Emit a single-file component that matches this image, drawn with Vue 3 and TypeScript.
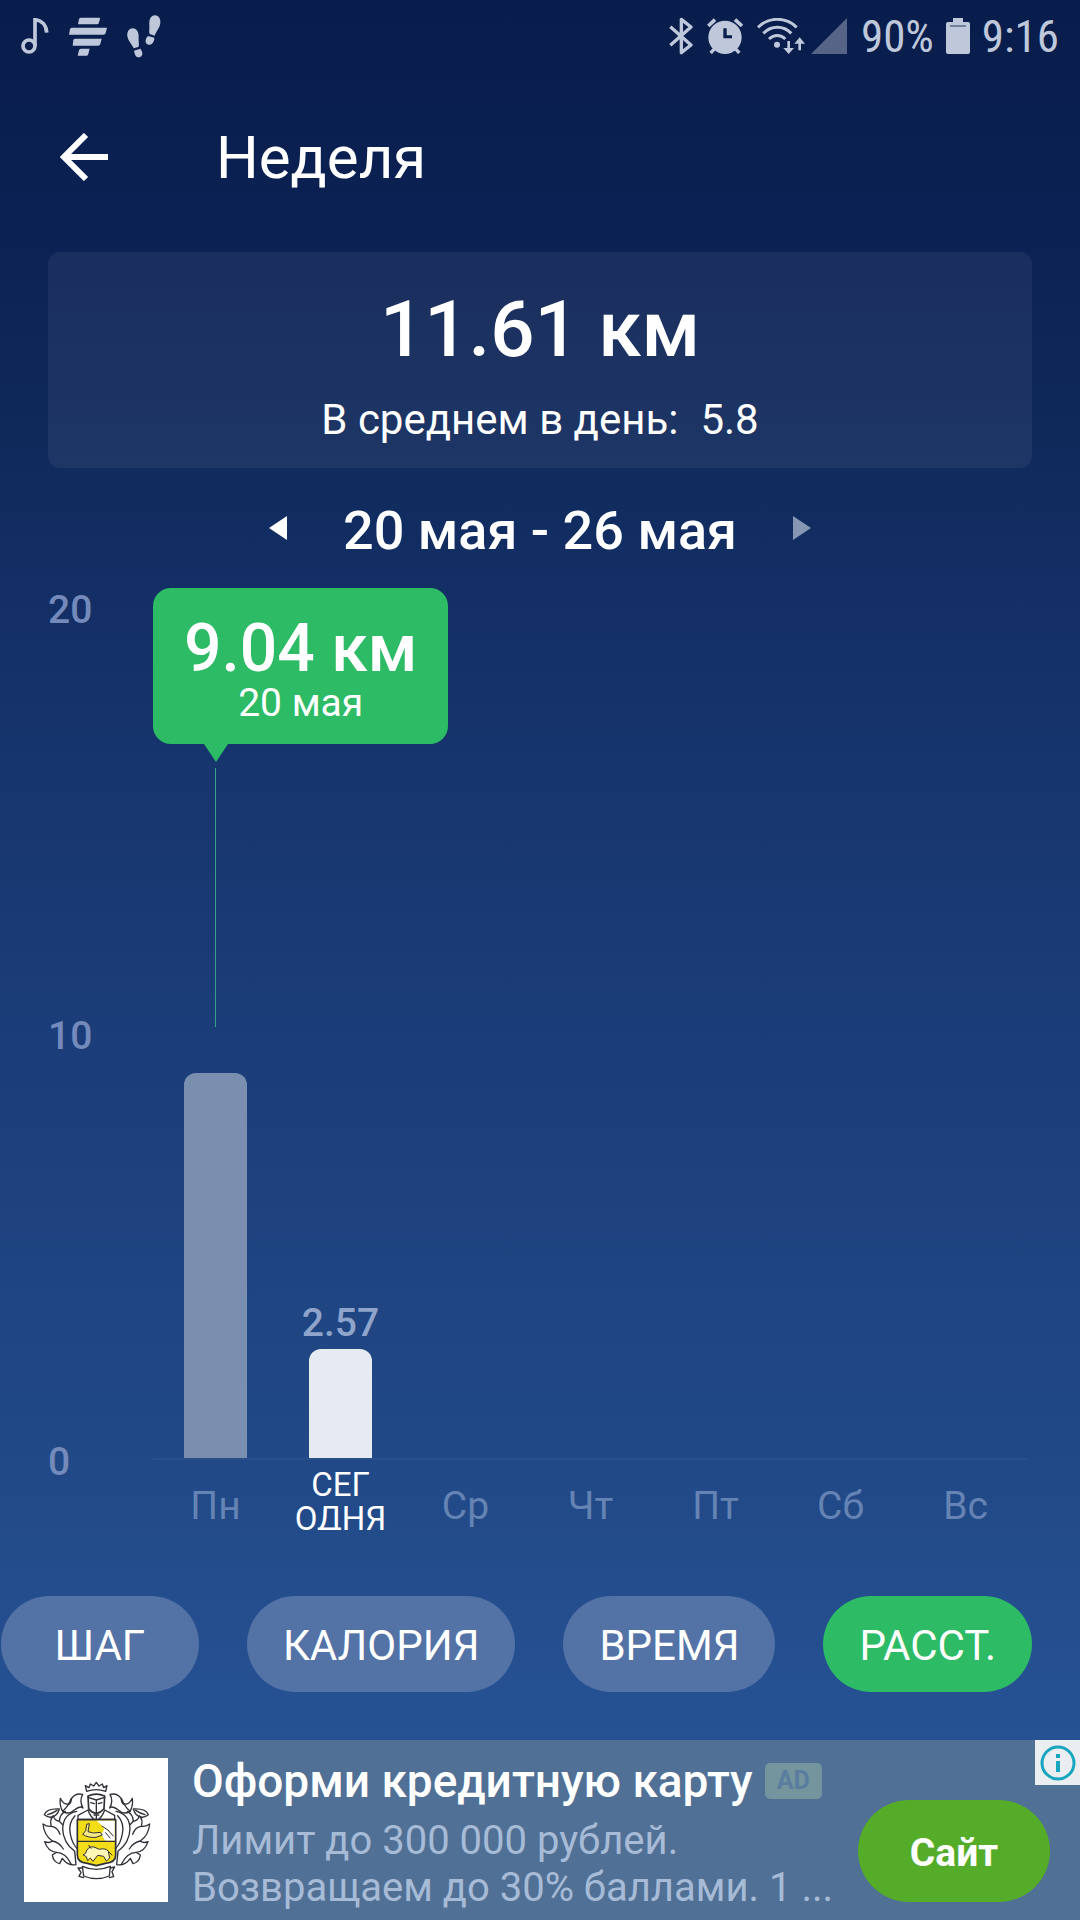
<script setup lang="ts">
import { computed, ref } from 'vue'

interface Day {
  label: string[]
  value: number
  today?: boolean
}

const maxValue = 20
const ticks = [20, 10, 0]
const selected = ref(0)
const metric = ref('РАССТ.')
const metrics = ['ШАГ', 'КАЛОРИЯ', 'ВРЕМЯ', 'РАССТ.']

const days: Day[] = [
  { label: ['Пн'], value: 9.04 },
  { label: ['СЕГ', 'ОДНЯ'], value: 2.57, today: true },
  { label: ['Ср'], value: 0 },
  { label: ['Чт'], value: 0 },
  { label: ['Пт'], value: 0 },
  { label: ['Сб'], value: 0 },
  { label: ['Вс'], value: 0 },
]

const total = computed(() => days.reduce((sum, d) => sum + d.value, 0).toFixed(2))
const barHeight = (value: number) => `${(value / maxValue) * 100}%`
</script>

<template>
  <div class="screen">
    <div class="status">
      <svg width="28" height="36" viewBox="64 51 84 108" fill="none" stroke="currentColor">
        <circle cx="88" cy="135" r="18" stroke-width="11" />
        <path d="M106 135V56C126 58 140 72 141 95" stroke-width="11" />
      </svg>
      <svg width="38" height="39" viewBox="210 46 114 117" fill="currentColor">
        <path d="M245 48H300Q304 48 303 52L299 65Q298 68 295 68H237L240 53Q241 48 245 48Z" />
        <path d="M218 78H324L320 94Q318 99 314 99H210L213 83Q214 78 218 78Z" />
        <path d="M227 111H308L304 127Q302 132 298 132H221L223 116Q224 111 227 111Z" />
        <path d="M246 141H272L268 157Q267 162 263 162H236L240 146Q241 141 246 141Z" />
      </svg>
      <svg width="34" height="43" viewBox="380 40 102 129" fill="currentColor">
        <path d="M381 103C380 89 387 80 397 80C409 80 416 92 415 108C414 120 418 131 414 136L400 140C395 128 383 118 381 103Z" />
        <path d="M401 147L420 141C427 149 429 162 420 166C407 171 403 158 401 147Z" />
        <path d="M480 64C481 50 474 41 464 41C451 41 446 54 447 70C448 82 445 91 448 97L463 102C467 90 478 80 480 64Z" />
        <path d="M443 103L462 108C462 120 455 130 445 129C433 127 433 112 443 103Z" />
      </svg>
      <span class="spacer"></span>
      <svg class="bt" width="24" height="38" viewBox="61 48 72 114" fill="none" stroke="currentColor" stroke-width="10">
        <path d="M65 77L127 132L98 155V55L127 78L65 133" stroke-linejoin="round" />
      </svg>
      <svg class="alarm" width="36" height="36" viewBox="177 51 108 108" fill="currentColor">
        <path fill-rule="evenodd" d="M231 59A50 50 0 1 0 231 159A50 50 0 1 0 231 59ZM226 82H236V103H252V112H226Z" />
        <path d="M181 75L201 56M261 56L282 75" stroke="currentColor" stroke-width="11" />
        <path d="M200 143L188 156M262 143L274 156" stroke="currentColor" stroke-width="10" />
      </svg>
      <svg class="wifi" width="48" height="36" viewBox="328 48 144 108" fill="none" stroke="currentColor" stroke-width="9">
        <path d="M331 76C363 44 415 44 447 76M347 94C371 70 407 70 431 94M364 111C379 97 399 97 413 111" />
        <circle cx="388" cy="128" r="9" fill="currentColor" stroke="none" />
        <path d="M423 117V145M456 145V117" stroke-width="8" />
        <path d="M407 138H439L423 156ZM440 125H472L456 106Z" fill="currentColor" stroke="none" />
      </svg>
      <svg class="signal" width="36" height="36" viewBox="0 0 36 36"><path d="M36 0V36H0Z" fill="#566488" /></svg>
      <span class="percent">90%</span>
      <svg class="battery" width="24" height="36" viewBox="0 0 24 36">
        <path d="M7 0H17V4H22Q24 4 24 6V34Q24 36 22 36H2Q0 36 0 34V6Q0 4 2 4H7Z" fill="currentColor" />
        <path d="M4 8H20" stroke="#71809f" stroke-width="2" />
      </svg>
      <span class="clock">9:16</span>
    </div>

    <header class="header">
      <button class="back" aria-label="Назад">
        <svg width="48" height="48" viewBox="0 0 48 48" fill="none" stroke="currentColor" stroke-width="6">
          <path d="M48 24H6M26 2L4 24L26 46" />
        </svg>
      </button>
      <h1>Неделя</h1>
    </header>

    <section class="summary">
      <p class="total">{{ total }} км</p>
      <p class="average"><span>В среднем в день:</span><span>5.8</span></p>
    </section>

    <div class="period">
      <button aria-label="Предыдущая неделя">
        <svg width="18" height="24" viewBox="0 0 18 24"><path d="M18 0V24L0 12Z" fill="currentColor" /></svg>
      </button>
      <h2>20 мая - 26 мая</h2>
      <button class="muted" aria-label="Следующая неделя">
        <svg width="18" height="24" viewBox="0 0 18 24"><path d="M0 0V24L18 12Z" fill="currentColor" /></svg>
      </button>
    </div>

    <section class="chart">
      <div class="axis">
        <span v-for="tick in ticks" :key="tick">{{ tick }}</span>
      </div>
      <div class="plot">
        <div v-for="(day, i) in days" :key="i" class="column">
          <template v-if="i === selected">
            <div class="tooltip">
              <strong>9.04 км</strong>
              <span>20 мая</span>
              <svg class="pointer" width="24" height="18" viewBox="0 0 24 18"><path d="M0 0H24L12 18Z" fill="currentColor" /></svg>
            </div>
            <div class="marker"></div>
          </template>
          <span v-else-if="day.value" class="value">{{ day.value }}</span>
          <div v-if="day.value" class="bar" :class="{ today: day.today }" :style="{ height: barHeight(day.value) }"></div>
        </div>
      </div>
      <div class="days">
        <span v-for="(day, i) in days" :key="i" class="day" :class="{ current: day.today }">
          <template v-for="(line, n) in day.label" :key="n"><br v-if="n" />{{ line }}</template>
        </span>
      </div>
    </section>

    <nav class="metrics">
      <button v-for="name in metrics" :key="name" :class="{ active: name === metric }" @click="metric = name">{{ name }}</button>
    </nav>

    <aside class="ad">
      <svg class="logo" viewBox="72 69 432 432" fill="none" stroke="#303138" stroke-width="4" stroke-linejoin="round" stroke-linecap="round">
        <path d="M260 169L256 152L267 158L271 147L281 153L289 142L297 153L307 147L311 158L321 152L317 169Q289 159 260 169Z" />
        <path d="M264 183Q289 172 314 183L312 221Q302 233 289 236Q275 233 266 221Z" stroke-width="5" />
        <path d="M264 187L289 195L314 187M289 195V235M272 203L283 206M295 206L306 203" />
        <path d="M264 225L234 241V253H344V241L314 225M264 225Q271 247 289 258Q307 247 314 225M282 240H296M289 240V254" />
        <path d="M232 254H347V361Q347 383 316 385L289 392L262 385Q232 383 232 361Z" fill="#f3dc18" stroke-width="5" />
        <path d="M290 257H344V317H316L303 297Q318 285 307 273Z" fill="#fff" stroke="none" />
        <path d="M233 319H346" />
        <path d="M260 269L257 287L248 298Q264 309 288 307L307 300L301 292L280 294L264 290L268 267ZM306 273Q325 282 340 303M317 293L330 309" fill="#f8e98a" stroke-width="3" />
        <path d="M257 354Q263 332 282 336L298 343Q318 338 325 349L329 369L319 378L311 364L293 361L279 379L271 369L263 377L259 365L250 360ZM266 331L273 340M325 349L336 360" fill="#fff7b8" stroke-width="3" />
        <g id="mantle">
          <path d="M249 219Q237 197 248 178Q226 173 215 190Q212 211 202 207Q190 209 181 190Q178 212 188 229Q207 241 223 225Q242 211 249 219Z" />
          <path d="M133 239Q140 220 178 222Q172 243 155 246Q146 249 133 239ZM143 239Q158 235 171 226" />
          <path d="M230 229Q190 236 188 281Q189 322 224 349L228 389Q203 393 187 370L179 386Q160 382 157 360L169 352Q143 349 134 320Q148 326 157 318Q132 301 129 267Q142 276 154 274Q148 254 160 242Q163 257 178 259Q179 238 196 229" />
          <path d="M225 242Q204 264 211 297Q216 326 232 341M154 274Q173 276 180 298M157 318Q178 322 190 342M169 352Q197 353 213 386M178 259L188 269M188 229Q203 217 214 190" />
        </g>
        <use href="#mantle" transform="translate(578 0) scale(-1 1)" />
        <path d="M247 394Q289 412 331 394L328 423Q289 439 251 423ZM247 399L234 399L243 412L237 424L251 428M331 399L344 396L336 410L341 425L328 428" />
      </svg>
      <div class="copy">
        <p class="headline">Оформи кредитную карту <small>AD</small></p>
        <p class="text">Лимит до 300 000 рублей.<br />Возвращаем до 30% баллами. 1 ...</p>
      </div>
      <button class="site">Сайт</button>
      <button class="info" aria-label="Информация о рекламе">
        <svg width="36" height="36" viewBox="0 0 36 36" fill="none" stroke="#17a5bf">
          <circle cx="18" cy="18" r="16" stroke-width="3" />
          <path d="M18 9V13M18 16V27" stroke-width="4" />
        </svg>
      </button>
    </aside>
  </div>
</template>

<style>
body {
  margin: 0;
  background: #071c4b;
}
</style>

<style scoped>
.screen {
  display: flex;
  flex-direction: column;
  min-height: 100vh;
  color: #fff;
  font-family: Roboto, "Noto Sans", sans-serif;
  font-size: 39px;
  background: linear-gradient(#081d4b 0%, #0c2254 13%, #102b5d 25%, #142f66 31%, #1b3e7a 55%, #224a88 78%, #265294 91%);
}

p,
h1,
h2 {
  margin: 0;
}

button {
  border: 0;
  padding: 0;
  color: inherit;
  font: inherit;
  background: none;
}

svg {
  display: block;
  flex: none;
}

.status {
  display: flex;
  align-items: center;
  gap: 20px;
  height: 72px;
  padding: 0 21px;
  color: #bfc8db;
  font-family: "Roboto Condensed", "Liberation Sans Narrow", Roboto, sans-serif;
  font-size: 45px;
}

.spacer {
  flex: 1;
}

.status .alarm,
.status .wifi,
.status .percent {
  margin-left: -6px;
}

.status .signal {
  margin-left: -14px;
}

.status .battery,
.status .clock {
  margin-left: -8px;
}

.header {
  display: flex;
  align-items: center;
  gap: 108px;
  height: 170px;
  padding: 0 60px;
}

h1 {
  font-size: 60px;
  font-weight: 400;
}

.summary {
  margin: 10px 48px 0;
  padding: 32px 0 20px;
  border-radius: 12px;
  text-align: center;
  background: rgba(255, 255, 255, 0.06);
}

.total {
  font-size: 78px;
  font-weight: 500;
  line-height: 92px;
}

.average {
  display: flex;
  justify-content: center;
  gap: 22px;
  margin-top: 16px;
  font-size: 42px;
  line-height: 56px;
}

.period {
  display: flex;
  justify-content: center;
  align-items: center;
  gap: 56px;
  height: 120px;
}

.period .muted {
  color: #8796b3;
}

h2 {
  padding-top: 4px;
  font-size: 54px;
  font-weight: 500;
}

.chart {
  flex: 1;
  display: grid;
  grid-template-columns: 105px 1fr;
  grid-template-rows: 1fr 90px;
  min-height: 960px;
  padding: 0 52px 0 48px;
}

.axis {
  display: flex;
  flex-direction: column;
  justify-content: space-between;
  margin: 2px 0 -24px;
  color: #748aba;
  font-weight: 500;
  line-height: 40px;
}

.plot {
  display: flex;
  margin-top: 18px;
}

.column {
  position: relative;
  flex: 1;
  display: flex;
  flex-direction: column;
  justify-content: flex-end;
  align-items: center;
}

.bar {
  flex: none;
  width: 63px;
  border-radius: 12px 12px 0 0;
  background: #7a8fb0;
}

.bar.today {
  background: #e6eaf2;
}

.value {
  margin-bottom: 4px;
  color: #8fa4ca;
  font-weight: 500;
  line-height: 44px;
}

.marker {
  flex: 1;
  width: 1px;
  margin: 162px 0 46px;
  background: #35a486;
}

.tooltip {
  position: absolute;
  top: -18px;
  left: 0;
  display: flex;
  flex-direction: column;
  align-items: center;
  padding: 26px 31px 22px;
  border-radius: 18px;
  white-space: nowrap;
  background: #2dbb66;
}

.tooltip strong {
  font-size: 66px;
  font-weight: 500;
  line-height: 70px;
}

.tooltip span {
  line-height: 38px;
}

.tooltip .pointer {
  position: absolute;
  top: 100%;
  left: 51px;
  color: #2dbb66;
}

.days {
  grid-column: 2;
  display: flex;
  border-top: 2px solid rgba(255, 255, 255, 0.04);
}

.day {
  flex: 1;
  color: #6583b3;
  text-align: center;
  line-height: 92px;
}

.day.current {
  height: 62px;
  margin-top: 8px;
  overflow: hidden;
  color: #fff;
  font-size: 33px;
  line-height: 34px;
}

.metrics {
  display: flex;
  justify-content: flex-end;
  gap: 48px;
  padding: 48px;
  padding-left: 0;
}

.metrics button {
  min-width: 198px;
  height: 96px;
  padding: 2px 36px 0;
  border-radius: 48px;
  font-size: 42px;
  background: #5373a7;
}

.metrics .active {
  background: #2dbb66;
}

.ad {
  position: relative;
  display: flex;
  align-items: center;
  gap: 24px;
  height: 180px;
  padding: 0 30px 0 24px;
  background: #507096;
}

.logo {
  width: 144px;
  height: 144px;
  background: #fff;
}

.copy {
  flex: 1;
  align-self: flex-start;
  padding-top: 15px;
  white-space: nowrap;
}

.headline {
  display: flex;
  align-items: center;
  gap: 12px;
  font-size: 46px;
  font-weight: 500;
  line-height: 52px;
}

.headline small {
  padding: 0 12px;
  border-radius: 5px;
  color: #5a7d9f;
  font-size: 25px;
  font-weight: 700;
  line-height: 36px;
  background: #74949e;
}

.text {
  margin-top: 10px;
  color: #a7bbd6;
  font-size: 40px;
  line-height: 47px;
}

.site {
  align-self: flex-end;
  width: 192px;
  height: 102px;
  margin-bottom: 18px;
  padding-top: 4px;
  border-radius: 51px;
  font-weight: 700;
  background: #54ac28;
}

.info {
  position: absolute;
  top: 0;
  right: 0;
  display: grid;
  place-items: center;
  width: 45px;
  height: 45px;
  background: #ebeef0;
}
</style>
